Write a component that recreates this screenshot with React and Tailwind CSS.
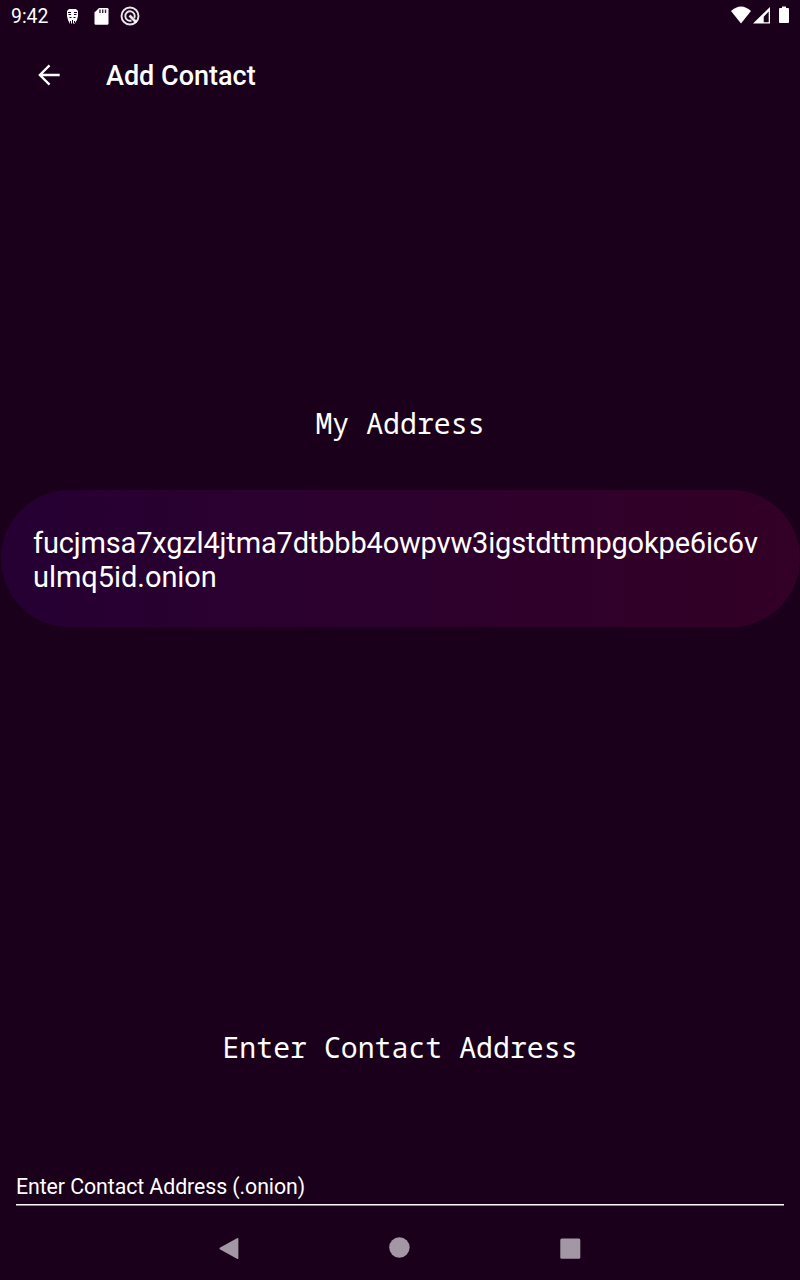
function StatusBar() {
  return (
    <header className="flex h-8 shrink-0 items-center justify-between">
      <div className="flex h-8 items-center">
        <span className="w-[66px] pl-[11px] pt-px text-[19.4px] leading-8">9:42</span>
        <svg className="h-8 w-3" viewBox="0 0 12 32" fill="none">
          <path d="M3 9h7l2 2v5l-1 4-2 3-1 1-1-1-1 1-1-1-1 1-2-4-1-4v-5z" fill="#fff" />
          <path d="M2 12.500h3M8 12.500h3M2.500 14.500h2.500M8 14.500h2.500M3.500 17.500h2M7.500 17.500h2M6.500 20v4M4.500 21v3M8.500 21v2" stroke="#1a001b" />
        </svg>
        <svg className="ml-4 h-8 w-[15px]" viewBox="0 0 15 32">
          <path d="M5 8h8.200q1.300 0 1.300 1.300v14.200q0 1.300-1.300 1.300H1.800q-1.300 0-1.300-1.300V12.500z" fill="#fff" />
          <path d="M6 9.500v3.500M8.700 9.500v3.500M11.500 9.500v3.500" stroke="#1a001b" strokeWidth="1.400" strokeOpacity=".85" />
        </svg>
        <svg className="ml-[11px] h-8 w-5" viewBox="0 0 20 32" fill="none" stroke="#fff" strokeOpacity=".9">
          <circle cx="10" cy="16" r="8.500" strokeWidth="1.900" />
          <path d="M14.300 18A4.700 4.700 0 1 0 11.500 20.500" strokeWidth="1.900" />
          <path d="M9.500 15.500l7 7" strokeWidth="2.600" />
        </svg>
      </div>
      <svg className="h-8 w-[70px]" viewBox="0 0 70 32" fill="#fff">
        <path d="M1 11q10-9 20 0L11 23.500z" />
        <path fillRule="evenodd" d="M40 7v16.500H23zM38.700 11.500v10.700h-5v-5.400z" />
        <path d="M52 6.500h4V8h2q1 0 1 1v13q0 1-1 1h-8q-1 0-1-1V9q0-1 1-1h2z" />
      </svg>
    </header>
  );
}

function AppBar() {
  return (
    <div className="flex h-[86px] shrink-0 items-center pl-[33px]">
      <svg className="size-8" viewBox="0 0 24 24" fill="currentColor">
        <path d="M20 11.100H7.300l5.700-5.700-1.200-1.300-7.900 7.900 7.900 7.900 1.200-1.300-5.700-5.700H20z" />
      </svg>
      <h1 className="pl-[41px] pt-0.5 text-[27px] font-medium leading-8">Add Contact</h1>
    </div>
  );
}

function SectionTitle({ children }) {
  return (
    <h2 className="text-center font-['Noto_Sans_Mono','DejaVu_Sans_Mono',monospace] text-[28.2px] leading-[34px]">
      {children}
    </h2>
  );
}

function NavigationBar() {
  return (
    <nav className="flex h-16 shrink-0 items-center justify-center">
      <svg className="h-16 w-[362px]" viewBox="0 0 362 64" fill="#a497a5">
        <path d="M.8 33.200Q0 32.500.8 31.700L18 22.200q1.400-.5 1.400.8v19q0 1.300-1.400.8z" />
        <circle cx="180.400" cy="31.500" r="10.200" />
        <rect x="341.300" y="22.500" width="20" height="20.300" rx="1.500" />
      </svg>
    </nav>
  );
}

export default function App() {
  return (
    <div className="flex h-[1280px] w-[800px] flex-col overflow-hidden bg-[#1a001b] font-['Roboto',sans-serif] text-white">
      <StatusBar />
      <AppBar />
      <main className="flex flex-1 flex-col pt-[288px]">
        <SectionTitle>My Address</SectionTitle>
        <div className="ml-px mt-[50px] h-[137px] w-[799px] rounded-[69px] bg-linear-to-r from-[#260033] to-[#330026] pl-8 pt-9 text-[29px] leading-[34px]">
          <p className="tracking-[-0.17px]">fucjmsa7xgzl4jtma7dtbbb4owpvw3igstdttmpgokpe6ic6v</p>
          <p className="tracking-[-0.05px]">ulmq5id.onion</p>
        </div>
        <div className="mt-[403px]">
          <SectionTitle>Enter Contact Address</SectionTitle>
        </div>
        <div className="mx-4 mt-[107px] pt-0.5 text-[21.3px] leading-7 tracking-[-0.07px]">
          <p>Enter Contact Address (.onion)</p>
          <div className="mt-[3px] h-px bg-white" />
          <div className="h-px bg-white/50" />
        </div>
      </main>
      <NavigationBar />
    </div>
  );
}
